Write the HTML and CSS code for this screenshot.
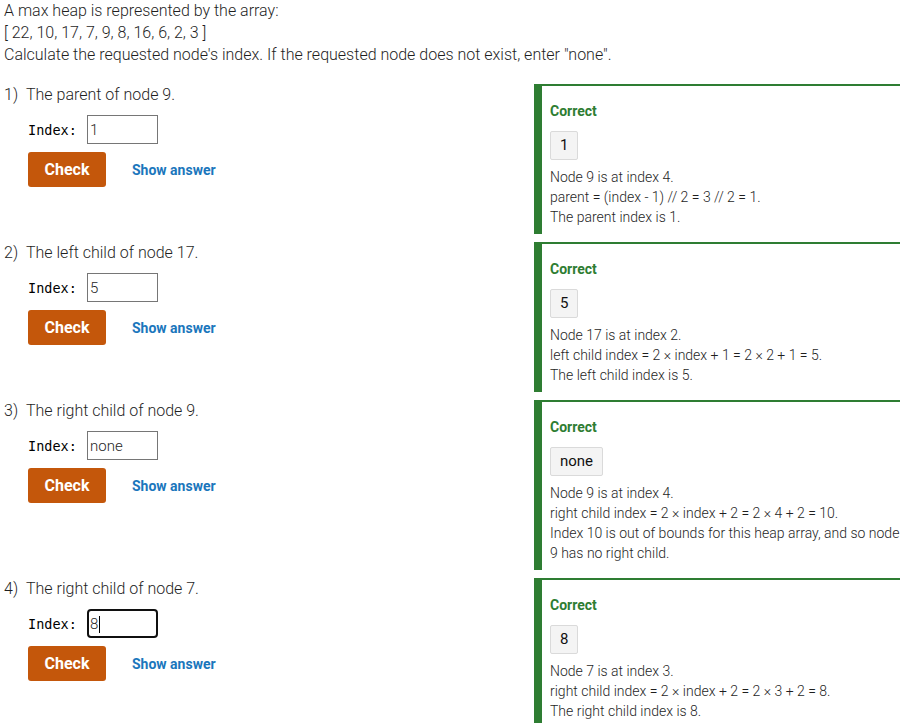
FILE: index.html
```html
<!DOCTYPE html>
<html lang="en">
<head>
<meta charset="utf-8">
<title>Max heap indices</title>
<link rel="stylesheet" href="styles.css">
</head>
<body>
<div class="page">
  <div class="intro">
    <p>A max heap is represented by the array:</p>
    <p>[ 22, 10, 17, 7, 9, 8, 16, 6, 2, 3 ]</p>
    <p>Calculate the requested node's index. If the requested node does not exist, enter "none".</p>
  </div>

  <div class="questions">
    <div class="q">
      <div class="q-main">
        <div class="q-text"><span class="q-num">1)</span><span>The parent of node 9.</span></div>
        <div class="q-input"><label class="q-label">Index:</label><span class="field-wrap"><input class="q-field" type="text" value="1"></span></div>
        <div class="q-actions"><button class="btn-check">Check</button><button class="btn-show">Show answer</button></div>
      </div>
      <div class="feedback">
        <div class="fb-title">Correct</div>
        <div class="fb-answer"><span class="chip">1</span></div>
        <div class="fb-expl">Node 9 is at index 4.<br>parent = (index - 1) // 2 = 3 // 2 = 1.<br>The parent index is 1.</div>
      </div>
    </div>

    <div class="q">
      <div class="q-main">
        <div class="q-text"><span class="q-num">2)</span><span>The left child of node 17.</span></div>
        <div class="q-input"><label class="q-label">Index:</label><span class="field-wrap"><input class="q-field" type="text" value="5"></span></div>
        <div class="q-actions"><button class="btn-check">Check</button><button class="btn-show">Show answer</button></div>
      </div>
      <div class="feedback">
        <div class="fb-title">Correct</div>
        <div class="fb-answer"><span class="chip">5</span></div>
        <div class="fb-expl">Node 17 is at index 2.<br>left child index = 2 × index + 1 = 2 × 2 + 1 = 5.<br>The left child index is 5.</div>
      </div>
    </div>

    <div class="q">
      <div class="q-main">
        <div class="q-text"><span class="q-num">3)</span><span>The right child of node 9.</span></div>
        <div class="q-input"><label class="q-label">Index:</label><span class="field-wrap"><input class="q-field" type="text" value="none"></span></div>
        <div class="q-actions"><button class="btn-check">Check</button><button class="btn-show">Show answer</button></div>
      </div>
      <div class="feedback">
        <div class="fb-title">Correct</div>
        <div class="fb-answer"><span class="chip">none</span></div>
        <div class="fb-expl">Node 9 is at index 4.<br>right child index = 2 × index + 2 = 2 × 4 + 2 = 10.<br>Index 10 is out of bounds for this heap array, and so node 9 has no right child.</div>
      </div>
    </div>

    <div class="q">
      <div class="q-main">
        <div class="q-text"><span class="q-num">4)</span><span>The right child of node 7.</span></div>
        <div class="q-input"><label class="q-label">Index:</label><span class="field-wrap"><input class="q-field is-focused" type="text" value="8"><span class="caret"></span></span></div>
        <div class="q-actions"><button class="btn-check">Check</button><button class="btn-show">Show answer</button></div>
      </div>
      <div class="feedback">
        <div class="fb-title">Correct</div>
        <div class="fb-answer"><span class="chip">8</span></div>
        <div class="fb-expl">Node 7 is at index 3.<br>right child index = 2 × index + 2 = 2 × 3 + 2 = 8.<br>The right child index is 8.</div>
      </div>
    </div>
  </div>
</div>
</body>
</html>
```

FILE: styles.css
```css
* { box-sizing: border-box; }

html, body {
  margin: 0;
  padding: 0;
  background: #ffffff;
}

body {
  font-family: Roboto, "Noto Sans", Arial, sans-serif;
  font-weight: 300;
  font-size: 16px;
  color: #1f1f1f;
}

.page {
  padding: 0 7px 0 4px;
}

.intro p {
  margin: 0;
  line-height: 22px;
}

.intro {
  margin-bottom: 18px;
}

.questions {
  display: flex;
  flex-direction: column;
  gap: 8px;
}

.q {
  display: flex;
  align-items: flex-start;
}

.q-main {
  width: 530px;
  flex: none;
}

.q-text {
  display: flex;
  line-height: 20px;
  padding-top: 1px;
}

.q-num {
  width: 22px;
  flex: none;
}

.q-input {
  display: flex;
  align-items: center;
  margin-top: 10px;
  padding-left: 24px;
}

.q-label {
  font-family: "DejaVu Sans Mono", "Liberation Mono", monospace;
  font-weight: 400;
  font-size: 13.5px;
  color: #000;
  width: 59px;
}

.field-wrap {
  position: relative;
  display: inline-block;
}

.q-field {
  width: 71px;
  height: 29px;
  border: 1px solid #767676;
  border-radius: 0;
  padding: 0 2px;
  font-family: Roboto, "Noto Sans", Arial, sans-serif;
  font-weight: 300;
  font-size: 15px;
  color: #1f1f1f;
  background: #fff;
  outline: none;
}

.q-field.is-focused {
  border: 2px solid #101010;
  border-radius: 4px;
  padding: 0 1px;
}

.caret {
  position: absolute;
  left: 12px;
  top: 7px;
  width: 1px;
  height: 17px;
  background: #000;
}

.q-actions {
  display: flex;
  align-items: center;
  margin-top: 8px;
  padding-left: 24px;
}

.btn-check {
  width: 78px;
  height: 35px;
  border: none;
  border-radius: 3px;
  background: #c4570b;
  color: #ffffff;
  font-family: Roboto, "Noto Sans", Arial, sans-serif;
  font-weight: 700;
  font-size: 16px;
  padding: 0;
  cursor: pointer;
}

.btn-show {
  margin-left: 26px;
  border: none;
  background: none;
  padding: 0;
  color: #1a76bc;
  font-family: Roboto, "Noto Sans", Arial, sans-serif;
  font-weight: 700;
  font-size: 14px;
  cursor: pointer;
}

.feedback {
  width: 366px;
  flex: none;
  border-left: 8px solid #2e7d32;
  border-top: 2px solid #2e7d32;
  padding: 15px 0 7px 8px;
}

.fb-title {
  color: #2e7d32;
  font-weight: 700;
  font-size: 14px;
  line-height: 20px;
}

.fb-answer {
  margin-top: 10px;
  display: flex;
}

.chip {
  display: inline-block;
  height: 29px;
  line-height: 27px;
  padding: 0 9px;
  background: #f4f4f4;
  border: 1px solid #dadada;
  border-radius: 2px;
  font-weight: 400;
  font-size: 15px;
  color: #111;
}

.fb-expl {
  margin-top: 7px;
  line-height: 20px;
  font-size: 14px;
}
```
